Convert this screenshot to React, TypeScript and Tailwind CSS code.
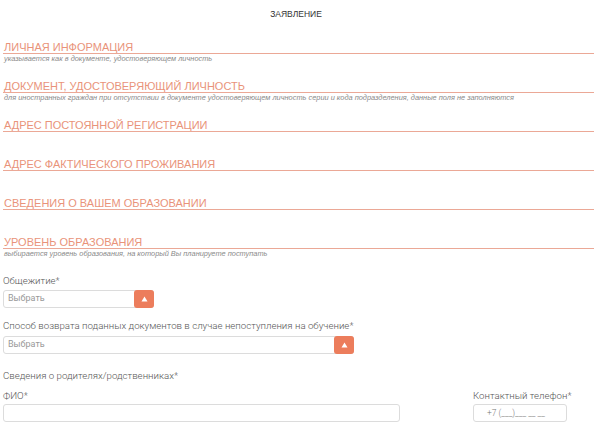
import type { ReactNode } from "react";

const sections: { title: string; note?: string }[] = [
  { title: "ЛИЧНАЯ ИНФОРМАЦИЯ", note: "указывается как в документе, удостоверяющем личность" },
  {
    title: "ДОКУМЕНТ, УДОСТОВЕРЯЮЩИЙ ЛИЧНОСТЬ",
    note: "для иностранных граждан при отсутствии в документе удостоверяющем личность серии и кода подразделения, данные поля не заполняются",
  },
  { title: "АДРЕС ПОСТОЯННОЙ РЕГИСТРАЦИИ" },
  { title: "АДРЕС ФАКТИЧЕСКОГО ПРОЖИВАНИЯ" },
  { title: "СВЕДЕНИЯ О ВАШЕМ ОБРАЗОВАНИИ" },
  { title: "УРОВЕНЬ ОБРАЗОВАНИЯ", note: "выбирается уровень образования, на который Вы планируете поступать" },
];

export default function App() {
  return (
    <main className="h-[426px] w-[600px] overflow-hidden bg-white px-[3px] font-['Liberation_Sans',Arial,sans-serif]">
      <h1 className="pr-[8px] pt-[9px] text-center text-[8.5px] leading-[10px] text-[#333]">ЗАЯВЛЕНИЕ</h1>

      <div className="mt-[22px] pr-[3px]">
        {sections.map((s) => (
          <Section key={s.title} title={s.title} note={s.note} />
        ))}
      </div>

      <div className="font-['Roboto',sans-serif] font-light">
        <Label>Общежитие*</Label>
        <Select className="mt-[3px] w-[151px]" />

        <Label className="mt-[12px]">
          Способ возврата поданных документов в случае непоступления на обучение*
        </Label>
        <Select className="mt-[4px] w-[351px]" />

        <Label className="mt-[16px]">Сведения о родителях/родственниках*</Label>

        <div className="mt-[8px] flex">
          <div className="w-[397px]">
            <Label>ФИО*</Label>
            <div className="mt-[2px] h-[18px] rounded-[3px] border border-[#dcdcdc] bg-white" />
          </div>
          <div className="ml-[73px] w-[94px]">
            <Label className="whitespace-nowrap">Контактный телефон*</Label>
            <div className="mt-[2px] flex h-[18px] items-center rounded-[3px] border border-[#dcdcdc] bg-white pl-[13px] text-[8.5px] text-[#777]">
              +7 (___)___ __ __
            </div>
          </div>
        </div>
      </div>
    </main>
  );
}

function Section({ title, note }: { title: string; note?: string }) {
  return (
    <section className="h-[39px]">
      <h2 className="border-b border-[#eba896] pl-[1px] text-[11px] leading-[12px] text-[#e9937a]">
        {title}
      </h2>
      {note && (
        <p className="mt-[1px] pl-[1px] text-[7.4px] leading-[8px] italic text-[#8a8a8a]">{note}</p>
      )}
    </section>
  );
}

function Label({ children, className = "" }: { children: ReactNode; className?: string }) {
  return <div className={`text-[9.7px] leading-[12px] text-[#555] ${className}`}>{children}</div>;
}

function Select({ className = "" }: { className?: string }) {
  return (
    <div className={`flex h-[18px] items-center rounded-[3px] border border-[#dcdcdc] bg-white ${className}`}>
      <span className="flex-1 pl-[4px] text-[9px] font-normal text-[#999]">Выбрать</span>
      <span className="mr-[-1px] flex h-[18px] w-[20px] items-center justify-center rounded-[3px] bg-[#ec7d5c]">
        <svg width="7" height="6" viewBox="0 0 7 6">
          <path d="M3.5 0.5 L6.5 5.5 L0.5 5.5 Z" fill="#fff" />
        </svg>
      </span>
    </div>
  );
}
